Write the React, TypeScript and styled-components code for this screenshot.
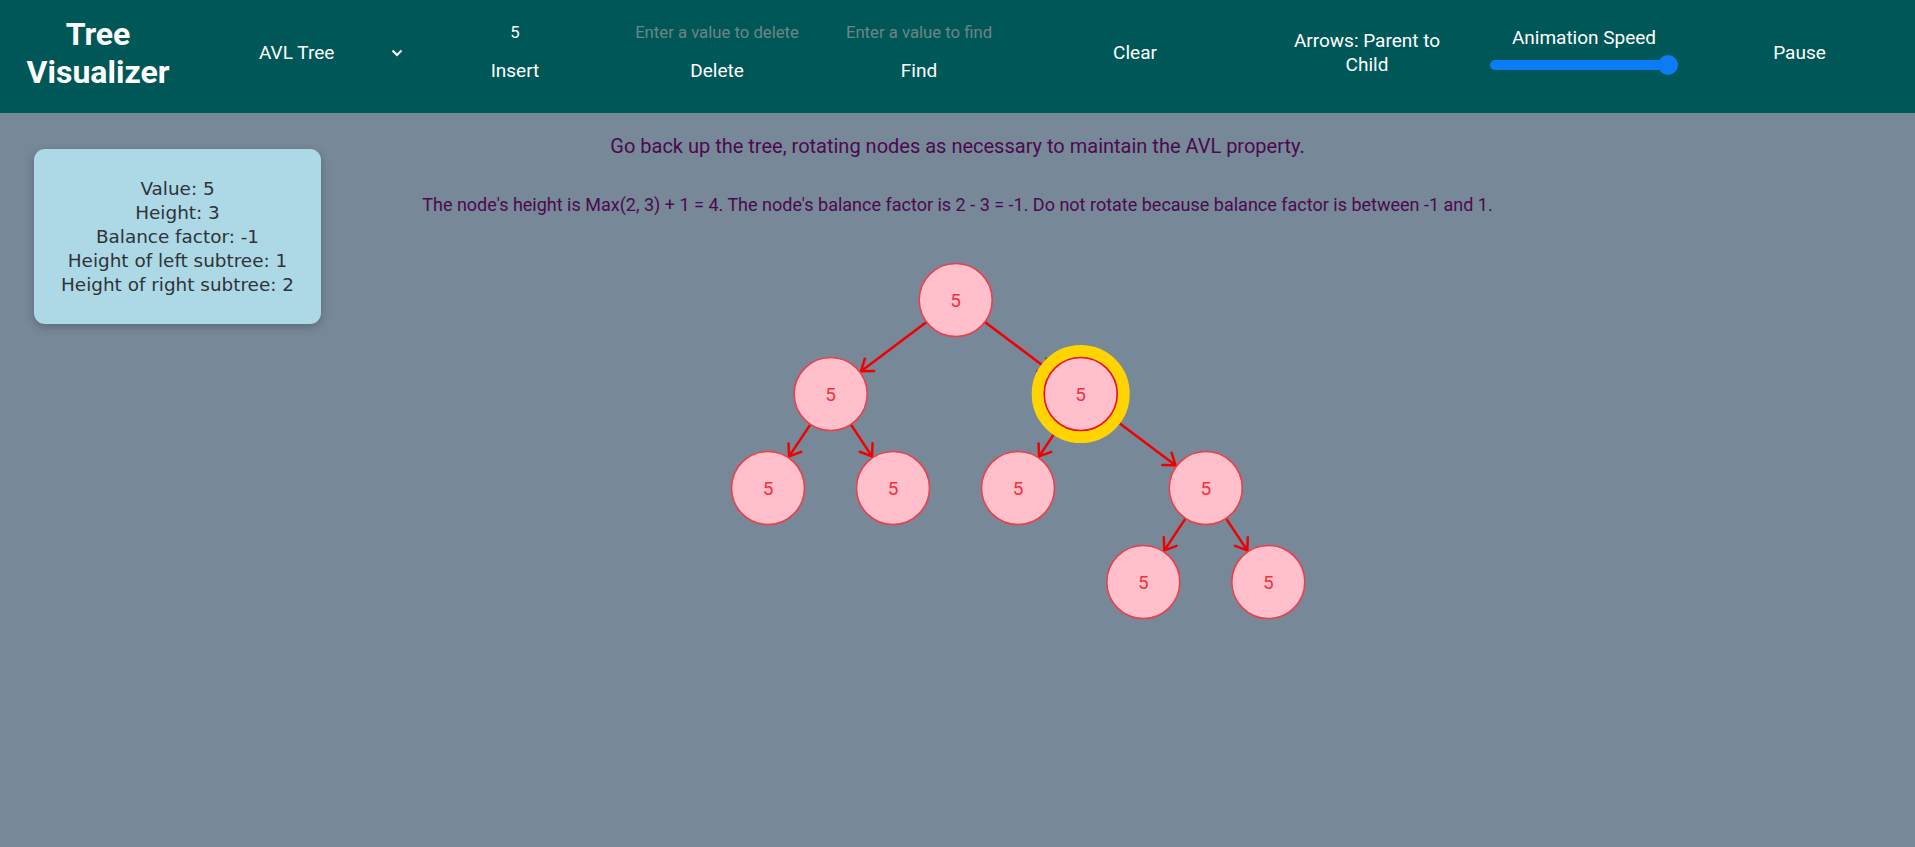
import React from "react";
import styled, { createGlobalStyle } from "styled-components";

const GlobalStyle = createGlobalStyle`
  html, body { margin: 0; padding: 0; }
  body {
    background: #778899;
    font-family: Roboto, "Liberation Sans", sans-serif;
    min-height: 847px;
  }
  * { box-sizing: border-box; }
`;

const Header = styled.header`
  display: grid;
  grid-template-columns: 196px 218px 202px 202px 202px 230px 234px 200px 231px;
  align-items: center;
  height: 113px;
  padding-bottom: 7px;
  background: #005757;
  color: #ffffff;
`;

const Title = styled.h1`
  margin: 0;
  font-size: 32px;
  line-height: 1.2;
  font-weight: 700;
  text-align: center;
  color: #ffffff;
`;

const SelectBox = styled.div`
  display: flex;
  align-items: center;
  justify-content: space-between;
  width: 160px;
  margin-left: 55px;
  padding: 0 8px;
  font-size: 19px;
  line-height: 24px;
  color: #ffffff;
`;

const Group = styled.div<{ $lift?: number }>`
  display: flex;
  flex-direction: column;
  align-items: center;
  padding-bottom: ${(p) => p.$lift ?? 0}px;
`;

const TextInput = styled.input`
  width: 190px;
  height: 24px;
  background: transparent;
  border: none;
  outline: none;
  text-align: center;
  font-family: Roboto, sans-serif;
  font-size: 16.7px;
  color: #ffffff;
  padding: 0;
  &::placeholder { color: #6e8585; }
`;

const HeaderButton = styled.button<{ $gap?: number }>`
  background: transparent;
  border: none;
  padding: 0;
  margin-top: ${(p) => p.$gap ?? 0}px;
  font-family: Roboto, sans-serif;
  font-size: 19px;
  line-height: 24px;
  color: #ffffff;
  text-align: center;
  cursor: pointer;
  max-width: 165px;
`;

const Label = styled.div`
  font-size: 19px;
  line-height: 24px;
  color: #ffffff;
`;

const SliderTrack = styled.div`
  position: relative;
  width: 188px;
  height: 10px;
  margin-top: 10px;
  border-radius: 5px;
  background: #0b7bf6;
`;

const SliderThumb = styled.div`
  position: absolute;
  right: 0;
  top: -5px;
  width: 20px;
  height: 20px;
  border-radius: 50%;
  background: #0b7bf6;
`;

const Main = styled.main`
  position: relative;
  padding-top: 20px;
`;

const InfoCard = styled.div`
  position: absolute;
  left: 34px;
  top: 36px;
  width: 287px;
  height: 175px;
  display: flex;
  flex-direction: column;
  justify-content: center;
  align-items: center;
  border-radius: 11px;
  background: #add8e6;
  box-shadow: 0 3px 10px rgba(0, 0, 0, 0.22);
  font-family: "DejaVu Sans", sans-serif;
  font-size: 18.4px;
  line-height: 24px;
  color: #2e3438;
`;

const CardLine = styled.div`
  text-align: center;
  white-space: nowrap;
`;

const StepHeading = styled.p`
  margin: 0;
  text-align: center;
  font-size: 20px;
  line-height: 26px;
  color: #4b0a4e;
`;

const StepDetail = styled.p`
  margin: 35px 0 0;
  text-align: center;
  font-size: 18px;
  line-height: 22px;
  color: #4b0a4e;
`;

const Canvas = styled.svg`
  display: block;
  width: 1915px;
  height: 420px;
`;

const R = 36.5;
const TOP = 216;

type N = { id: string; x: number; y: number; hl?: boolean };

const nodes: N[] = [
  { id: "root", x: 955.7, y: 300 },
  { id: "L", x: 830.7, y: 394 },
  { id: "R", x: 1080.7, y: 394, hl: true },
  { id: "LL", x: 768, y: 488 },
  { id: "LR", x: 893, y: 488 },
  { id: "RL", x: 1018, y: 488 },
  { id: "RR", x: 1205.8, y: 488 },
  { id: "RRL", x: 1143.3, y: 582 },
  { id: "RRR", x: 1268.3, y: 582 },
];

const edges: [string, string][] = [
  ["root", "L"],
  ["root", "R"],
  ["L", "LL"],
  ["L", "LR"],
  ["R", "RL"],
  ["R", "RR"],
  ["RR", "RRL"],
  ["RR", "RRR"],
];

const byId = (id: string) => nodes.find((n) => n.id === id)!;

function Edge({ a, b }: { a: N; b: N }) {
  const x1 = a.x, y1 = a.y - TOP, x2 = b.x, y2 = b.y - TOP;
  const dx = x2 - x1, dy = y2 - y1;
  const len = Math.hypot(dx, dy);
  const ux = dx / len, uy = dy / len;
  const sx = x1 + ux * R, sy = y1 + uy * R;
  const ex = x2 - ux * (R + 1.5), ey = y2 - uy * (R + 1.5);
  const ah = 13;
  const ang = (36 * Math.PI) / 180;
  const bx = -ux, by = -uy;
  const w1x = ex + ah * (bx * Math.cos(ang) - by * Math.sin(ang));
  const w1y = ey + ah * (bx * Math.sin(ang) + by * Math.cos(ang));
  const w2x = ex + ah * (bx * Math.cos(-ang) - by * Math.sin(-ang));
  const w2y = ey + ah * (bx * Math.sin(-ang) + by * Math.cos(-ang));
  return (
    <g stroke="#f00000" strokeWidth={2.5} fill="none" strokeLinecap="round">
      <line x1={sx} y1={sy} x2={ex} y2={ey} />
      <polyline points={`${w1x},${w1y} ${ex},${ey} ${w2x},${w2y}`} strokeLinejoin="round" />
    </g>
  );
}

function TreeNode({ n }: { n: N }) {
  const y = n.y - TOP;
  return (
    <g>
      {n.hl && <circle cx={n.x} cy={y} r={43} fill="none" stroke="#ffd400" strokeWidth={12} />}
      <circle cx={n.x} cy={y} r={R} fill="#ffc0cb" stroke={n.hl ? "#f01020" : "#e8404c"} strokeWidth={1.6} />
      <text
        x={n.x}
        y={y + 6.8}
        textAnchor="middle"
        fontFamily="Roboto, sans-serif"
        fontSize={19}
        fill="#f5303e"
      >
        5
      </text>
    </g>
  );
}

function Chevron() {
  return (
    <svg width="12" height="8" viewBox="0 0 12 8">
      <polyline points="1.5,1.5 6,6 10.5,1.5" fill="none" stroke="#ffffff" strokeWidth="2" />
    </svg>
  );
}

export default function App() {
  return (
    <>
      <GlobalStyle />
      <Header>
        <Title>
          Tree
          <br />
          Visualizer
        </Title>
        <SelectBox>
          <span>AVL Tree</span>
          <Chevron />
        </SelectBox>
        <Group $lift={3}>
          <TextInput defaultValue="5" />
          <HeaderButton $gap={15}>Insert</HeaderButton>
        </Group>
        <Group $lift={3}>
          <TextInput placeholder="Enter a value to delete" />
          <HeaderButton $gap={15}>Delete</HeaderButton>
        </Group>
        <Group $lift={3}>
          <TextInput placeholder="Enter a value to find" />
          <HeaderButton $gap={15}>Find</HeaderButton>
        </Group>
        <Group>
          <HeaderButton>Clear</HeaderButton>
        </Group>
        <Group>
          <HeaderButton>Arrows: Parent to Child</HeaderButton>
        </Group>
        <Group $lift={11}>
          <Label>Animation Speed</Label>
          <SliderTrack>
            <SliderThumb />
          </SliderTrack>
        </Group>
        <Group>
          <HeaderButton>Pause</HeaderButton>
        </Group>
      </Header>
      <Main>
        <InfoCard>
          <CardLine>Value: 5</CardLine>
          <CardLine>Height: 3</CardLine>
          <CardLine>Balance factor: -1</CardLine>
          <CardLine>Height of left subtree: 1</CardLine>
          <CardLine>Height of right subtree: 2</CardLine>
        </InfoCard>
        <StepHeading>Go back up the tree, rotating nodes as necessary to maintain the AVL property.</StepHeading>
        <StepDetail>
          The node's height is Max(2, 3) + 1 = 4. The node's balance factor is 2 - 3 = -1. Do not rotate because
          balance factor is between -1 and 1.
        </StepDetail>
        <Canvas>
          {edges.map(([a, b]) => (
            <Edge key={a + b} a={byId(a)} b={byId(b)} />
          ))}
          {nodes.map((n) => (
            <TreeNode key={n.id} n={n} />
          ))}
        </Canvas>
      </Main>
    </>
  );
}
